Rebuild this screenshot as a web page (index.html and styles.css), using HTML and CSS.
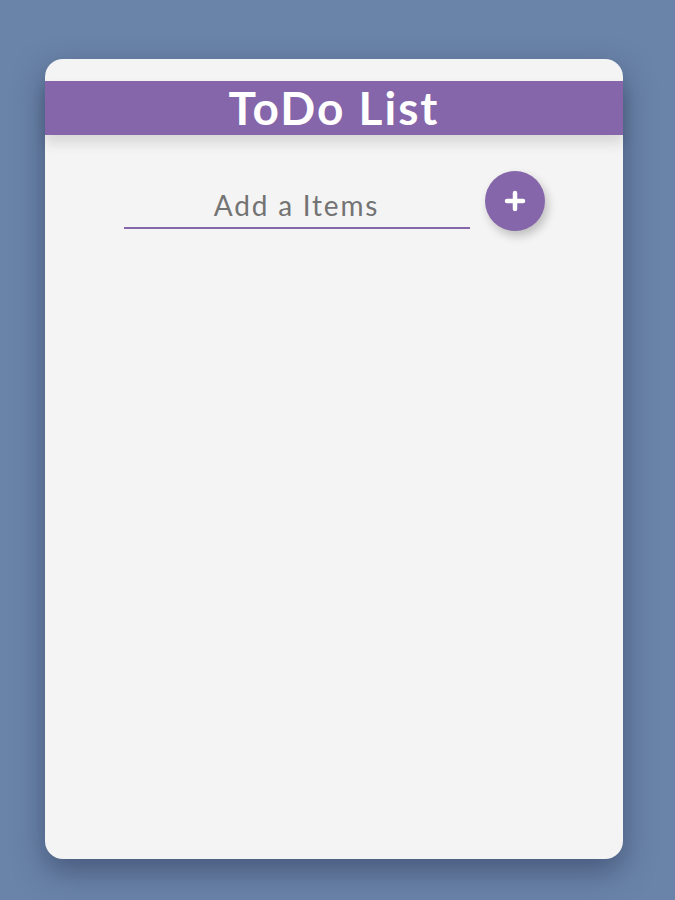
FILE: index.html
```html
<!DOCTYPE html>
<html>
<head>
<meta charset="utf-8">
<link rel="stylesheet" href="styles.css">
</head>
<body>
<div class="card">
  <div class="header"><h1 class="title">ToDo List</h1></div>
  <div class="add-row">
    <input class="add-input" type="text" placeholder="Add a Items">
    <button class="add-btn" aria-label="Add">
      <svg width="22" height="22" viewBox="0 0 22 22"><path d="M11 3v16M3 11h16" stroke="#fff" stroke-width="4.5" stroke-linecap="round"/></svg>
    </button>
  </div>
</div>
</body>
</html>
```
FILE: styles.css
```css
html, body { margin: 0; padding: 0; }
body {
  background: #6a83a8;
  height: 900px;
  padding-top: 59px;
  box-sizing: border-box;
  font-family: "Lato", "Noto Sans", sans-serif;
}
.card {
  width: 578px;
  height: 800px;
  margin-left: 45px;
  background: #f4f4f4;
  border-radius: 18px;
  box-shadow: 0 12px 30px rgba(40, 55, 85, 0.55);
  padding-top: 22px;
  box-sizing: border-box;
}
.header {
  background: #8566aa;
  height: 54px;
  display: flex;
  align-items: center;
  justify-content: center;
  box-shadow: 0 8px 12px rgba(0, 0, 0, 0.12);
}
.title {
  margin: 0;
  color: #fff;
  font-size: 46px;
  font-weight: 700;
  letter-spacing: 2px;
  line-height: 1;
  padding-top: 0;
}
.add-row {
  display: flex;
  justify-content: center;
  align-items: flex-end;
  gap: 15px;
  margin-top: 36px;
}
.add-input {
  width: 346px;
  height: 44px;
  margin-bottom: 2px;
  box-sizing: border-box;
  border: none;
  border-bottom: 2px solid #8566aa;
  background: transparent;
  outline: none;
  text-align: center;
  font-family: "Lato", "Noto Sans", sans-serif;
  font-size: 28px;
  letter-spacing: 1.8px;
  color: #666;
  padding: 0 0 3px 0;
}
.add-input::placeholder { color: #737373; }
.add-btn {
  width: 60px;
  height: 60px;
  border-radius: 50%;
  border: none;
  background: #8566aa;
  display: flex;
  align-items: center;
  justify-content: center;
  box-shadow: 3px 5px 10px rgba(0, 0, 0, 0.22);
  padding: 0;
}
```
